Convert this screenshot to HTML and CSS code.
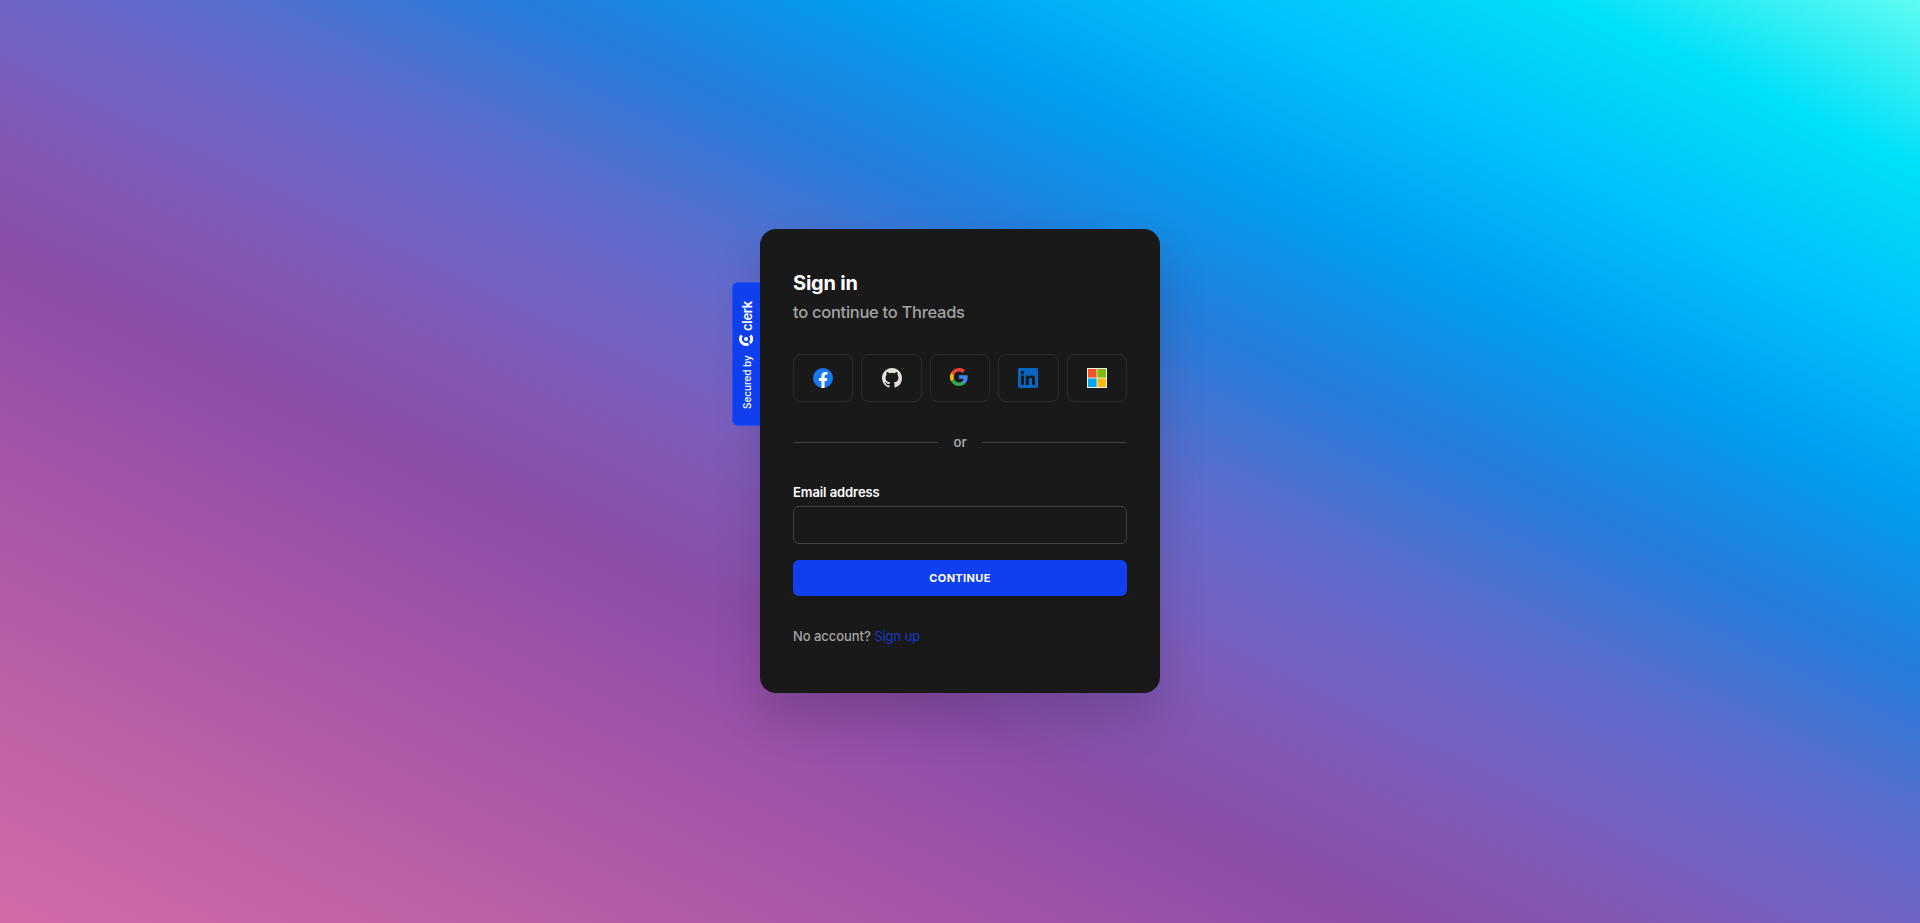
FILE: index.html
```html
<!DOCTYPE html>
<html lang="en">
<head>
<meta charset="utf-8">
<title>Sign in</title>
<link rel="stylesheet" href="styles.css">
</head>
<body>
<main class="card">
  <aside class="badge">
    <span class="badge-text">Secured by</span>
    <svg class="badge-mark" viewBox="-1 0 14 14" width="14" height="14"><path d="M10.6 2.7A5.4 5.4 0 0 0 3.3 3.1 5.4 5.4 0 0 0 2.2 9.6" fill="none" stroke="#fff" stroke-width="3"/><path d="M3.2 10.9A5.4 5.4 0 0 0 10.6 11.4" fill="none" stroke="#fff" stroke-width="3"/><circle cx="7" cy="7" r="2" fill="#fff"/></svg>
    <span class="badge-brand">clerk</span>
  </aside>
  <header class="header">
    <h1 class="title">Sign in</h1>
    <p class="subtitle">to continue to Threads</p>
  </header>
  <div class="socials">
    <button class="social" aria-label="Facebook"><svg width="20" height="20" viewBox="0 0 20 20"><circle cx="10" cy="10" r="10" fill="#1877f2"/><path fill="#fff" d="M13.9 12.9l.44-2.9h-2.77V8.12c0-.79.39-1.56 1.63-1.56h1.26V4.1s-1.14-.2-2.24-.2c-2.28 0-3.78 1.39-3.78 3.9V10H5.9v2.9h2.54V20h3.12v-7.1z"/></svg></button>
    <button class="social" aria-label="GitHub"><svg width="20" height="20" viewBox="0 0 16 16"><path fill="#e4e0da" d="M8 0C3.58 0 0 3.58 0 8c0 3.54 2.29 6.53 5.47 7.59.4.07.55-.17.55-.38 0-.19-.01-.82-.01-1.49-2.01.37-2.53-.49-2.69-.94-.09-.23-.48-.94-.82-1.13-.28-.15-.68-.52-.01-.53.63-.01 1.08.58 1.23.82.72 1.21 1.87.87 2.33.66.07-.52.28-.87.51-1.07-1.78-.2-3.64-.89-3.64-3.95 0-.87.31-1.59.82-2.15-.08-.2-.36-1.02.08-2.12 0 0 .67-.21 2.2.82a7.6 7.6 0 0 1 4 0c1.53-1.04 2.2-.82 2.2-.82.44 1.1.16 1.92.08 2.12.51.56.82 1.27.82 2.15 0 3.07-1.87 3.75-3.65 3.95.29.25.54.73.54 1.48 0 1.07-.01 1.93-.01 2.2 0 .21.15.46.55.38A8.01 8.01 0 0 0 16 8c0-4.42-3.58-8-8-8z"/></svg></button>
    <button class="social" aria-label="Google"><svg class="google" width="18" height="18" viewBox="0 0 18 18"><path fill="#4285f4" d="M17.64 9.2c0-.63-.06-1.25-.16-1.84H9v3.49h4.84a4.14 4.14 0 0 1-1.8 2.71v2.26h2.92c1.7-1.57 2.68-3.88 2.68-6.62z"/><path fill="#34a853" d="M9 18c2.43 0 4.47-.8 5.96-2.18l-2.92-2.26c-.8.54-1.84.86-3.04.86-2.34 0-4.33-1.58-5.04-3.71H.96v2.33A9 9 0 0 0 9 18z"/><path fill="#fbbc05" d="M3.96 10.71a5.4 5.4 0 0 1 0-3.42V4.96H.96a9 9 0 0 0 0 8.08z"/><path fill="#ea4335" d="M9 3.58c1.32 0 2.5.45 3.44 1.35l2.58-2.59A9 9 0 0 0 .96 4.96l3 2.33C4.67 5.16 6.66 3.58 9 3.58z"/></svg></button>
    <button class="social" aria-label="LinkedIn"><svg width="20" height="20" viewBox="0 0 24 24"><path fill="#0a66c2" d="M20.45 20.45h-3.56v-5.57c0-1.33-.02-3.04-1.85-3.04-1.85 0-2.14 1.45-2.14 2.94v5.67H9.35V9h3.42v1.56h.04a3.75 3.75 0 0 1 3.37-1.85c3.6 0 4.27 2.37 4.27 5.46zM5.34 7.43a2.06 2.06 0 1 1 0-4.13 2.06 2.06 0 0 1 0 4.13zm1.78 13.02H3.55V9h3.57zM22.22 0H1.77C.79 0 0 .77 0 1.73v20.54C0 23.23.79 24 1.77 24h20.45c.98 0 1.78-.77 1.78-1.73V1.73C24 .77 23.2 0 22.22 0z"/></svg></button>
    <button class="social" aria-label="Microsoft"><svg width="20" height="20" viewBox="0 0 20 20"><path fill="#f3f3f3" d="M0 0h20v20H0z"/><path fill="#f35325" d="M1 1h8.6v8.6H1z"/><path fill="#81bc06" d="M10.4 1H19v8.6h-8.6z"/><path fill="#05a6f0" d="M1 10.4h8.6V19H1z"/><path fill="#ffba08" d="M10.4 10.4H19V19h-8.6z"/></svg></button>
  </div>
  <div class="divider"><span>or</span></div>
  <form class="form">
    <label class="label" for="email">Email address</label>
    <input class="input" id="email" type="text">
    <button class="submit" type="button">Continue</button>
  </form>
  <footer class="footer">No account? <a class="link" href="#">Sign up</a></footer>
</main>
</body>
</html>
```

FILE: styles.css
```css
* { box-sizing: border-box; }

body {
  margin: 0;
  height: 100vh;
  overflow: hidden;
  display: flex;
  align-items: center;
  justify-content: center;
  padding-bottom: 1px;
  font-family: Inter, sans-serif;
  background: linear-gradient(to right top, #d16ba5, #c263a6, #b35ba7, #a054a8, #8b4da8, #7d5dbb, #5f6ccd, #257ddb, #009ff0, #00c1fb, #00e0f8, #5ffbf1);
}

.card {
  position: relative;
  width: 400px;
  height: 464px;
  padding: 40px 33px 0;
  border-radius: 16px;
  background: #19191a;
  color: #fff;
  box-shadow: 0 24px 48px rgba(0, 0, 0, 0.16);
}

.badge {
  position: absolute;
  right: 100%;
  top: 53px;
  width: 28px;
  height: 144px;
  display: flex;
  align-items: center;
  justify-content: center;
  padding-bottom: 2px;
  writing-mode: vertical-rl;
  transform: rotate(180deg);
  border: 1px solid #2a4ff0;
  border-left: 0;
  border-radius: 0 6px 6px 0;
  background: #103fef;
}

.badge-text { font-size: 10px; line-height: 14px; font-weight: 500; letter-spacing: -0.05px; }
.badge-mark { margin: 9px 0 2px; transform: rotate(90deg); }
.badge-brand { font-size: 13px; line-height: 14px; font-weight: 600; letter-spacing: -0.3px; }

.title { margin: 0; font-size: 20px; line-height: 28px; font-weight: 700; letter-spacing: -0.2px; }
.subtitle { margin: 3px 0 0; font-size: 16.5px; line-height: 24px; font-weight: 450; letter-spacing: -0.28px; color: #a3a3a3; }

.socials {
  display: grid;
  grid-template-columns: repeat(5, 1fr);
  gap: 8px;
  margin-top: 30px;
}

.social {
  display: flex;
  align-items: center;
  justify-content: center;
  height: 48px;
  padding: 0;
  border: 1px solid #2d2d2e;
  border-radius: 8px;
  background: transparent;
}

.google { margin: 0 2px 2px 0; }

.divider {
  display: flex;
  align-items: center;
  gap: 15px;
  height: 20px;
  margin-top: 30px;
  font-size: 13px;
  font-weight: 600;
  color: #a3a3a3;
}

.divider::before,
.divider::after { content: ""; flex: 1; height: 1px; background: #424243; }

.form { display: flex; flex-direction: column; margin-top: 31px; }
.label { font-size: 13px; line-height: 18px; font-weight: 600; letter-spacing: -0.08px; }

.input {
  height: 38px;
  margin: 5px 0 16px;
  border: 1px solid #424243;
  border-radius: 6px;
  background: #19191a;
}

.submit {
  height: 36px;
  padding: 0;
  border: 0;
  border-radius: 6px;
  background: #103fef;
  color: #fff;
  font: 700 11px/16px Inter, sans-serif;
  letter-spacing: 0.35px;
  text-transform: uppercase;
}

.footer { margin-top: 30px; font-size: 13px; line-height: 20px; font-weight: 500; letter-spacing: -0.05px; color: #a3a3a3; }
.link { color: #1339c8; font-weight: 400; text-decoration: none; }
```
